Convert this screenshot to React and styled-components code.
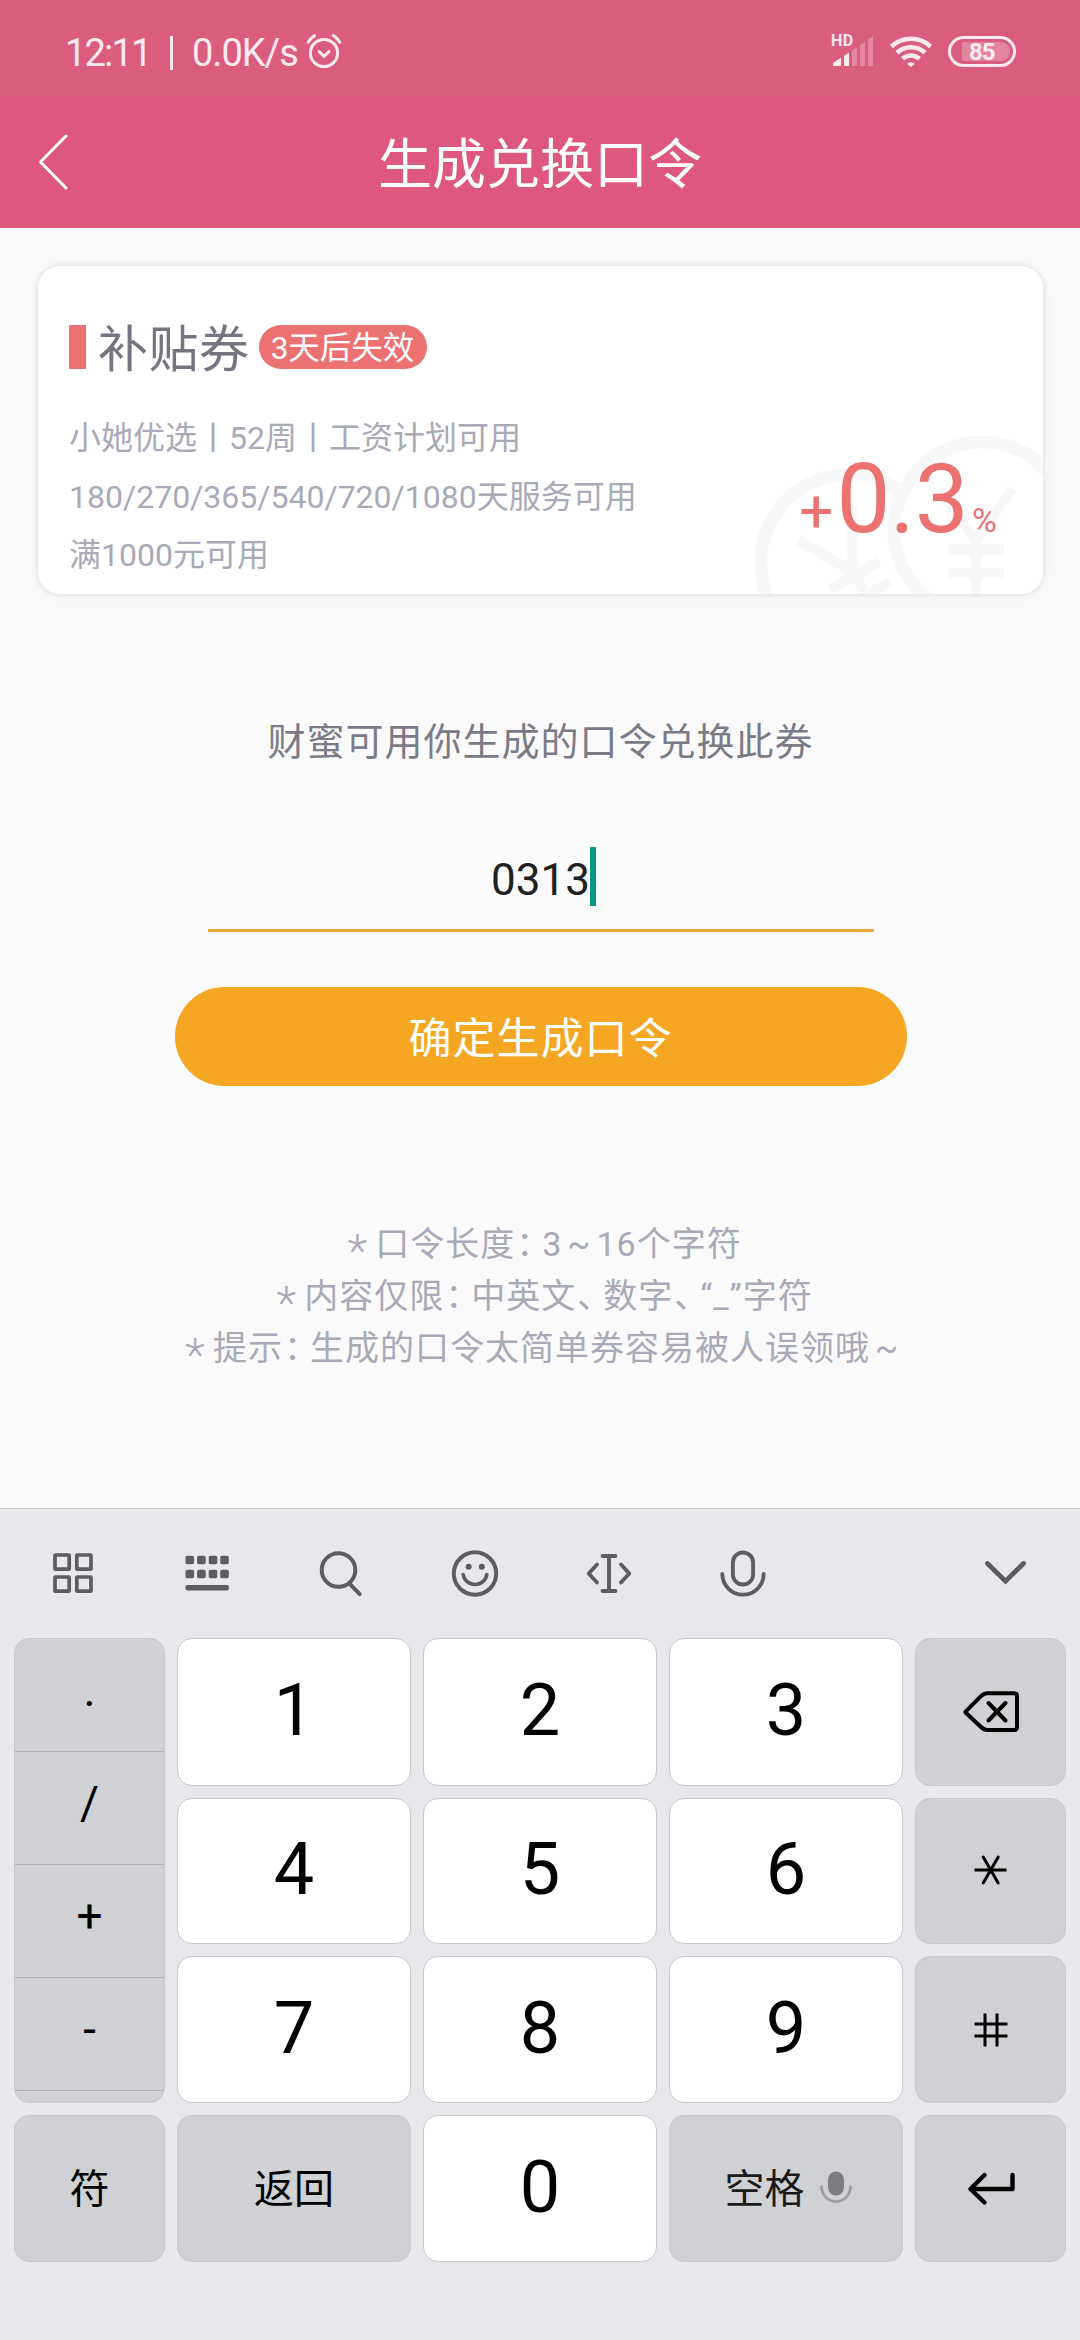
import styled, { createGlobalStyle } from "styled-components";
import { useState } from "react";

const keyRows = [
  ["1", "2", "3", "delete"],
  ["4", "5", "6", "star"],
  ["7", "8", "9", "hash"],
];

const symbols = [".", "/", "+", "-"];

const AlarmIcon = () => (
  <svg width="36" height="36" viewBox="0 0 36 36" fill="none" stroke="currentColor" strokeLinecap="round">
    <circle cx="18" cy="20" r="13.6" strokeWidth="3" />
    <path d="M13 18.5l5 4.8 5-4.8" strokeWidth="3" strokeLinejoin="round" />
    <path d="M2.2 9.2C3.8 6.2 6 4 8.6 2.6M33.8 9.2C32.2 6.2 30 4 27.4 2.6" strokeWidth="3" />
  </svg>
);

const SignalIcon = () => (
  <svg width="42" height="30" viewBox="0 0 42 30" fill="currentColor">
    <path d="M1 30v-3l8-5.5V30zM12 30V20l5-3.5V30z" />
    <path d="M20 30V14.5l5-3V30zM28 30V9l5-3.2V30zM36 30V3.5L41 0v30z" opacity="0.3" />
  </svg>
);

const WifiIcon = () => (
  <svg width="42" height="31" viewBox="0 0 42 31" fill="none" stroke="currentColor" strokeWidth="4.6">
    <path d="M1.4 10.6a28.5 28.5 0 0 1 39.2 0" />
    <path d="M7 16.8a20.5 20.5 0 0 1 28 0" />
    <path d="M12.6 22.8a12.5 12.5 0 0 1 16.8 0" />
    <path d="M21 31l-3.8-3.2a5.5 5.5 0 0 1 7.6 0z" fill="currentColor" stroke="none" />
  </svg>
);

const BackIcon = () => (
  <svg width="30" height="56" viewBox="0 0 30 56" fill="none" stroke="#fff" strokeWidth="3" strokeLinecap="round">
    <path d="M27 2L2.2 27.2q-.7.8 0 1.600L27 54" />
  </svg>
);

const Coins = () => (
  <svg width="300" height="170" viewBox="743 424 300 170" fill="none" stroke="#f8f8f8">
    <circle cx="849" cy="563" r="88.500" strokeWidth="13" />
    <path d="M798 540l54 31M852.500 506v65l24 42M830 589l49-27M843 608l47-26" strokeWidth="10.500" />
    <circle cx="982" cy="530" r="88" strokeWidth="13" fill="#fff" />
    <path d="M939 489l37 52 36-52M976 538v60M948.500 549.500H1004M948.500 573H1004" strokeWidth="10" />
  </svg>
);

const toolIcons = {
  grid: (
    <g strokeWidth="3.7">
      <rect x="6" y="6" width="14.200" height="14.200" rx="0.500" />
      <rect x="27.800" y="6" width="14.200" height="14.200" rx="0.500" />
      <rect x="6" y="28" width="14.200" height="14.200" rx="0.500" />
      <rect x="27.800" y="28" width="14.200" height="14.200" rx="0.500" />
    </g>
  ),
  keyboard: (
    <g fill="currentColor" stroke="none">
      {[6.7, 20.7].map((y) =>
        [2.5, 14.1, 25.7, 37.2].map((x) => (
          <rect key={`${x}-${y}`} x={x} y={y} width="8.600" height="8.600" rx="1.800" />
        ))
      )}
      <rect x="2.5" y="36" width="43.300" height="5.400" rx="1.800" />
    </g>
  ),
  search: (
    <g strokeWidth="4">
      <circle cx="21.500" cy="21" r="16.800" />
      <path d="M33.200 35.300l9.500 9.800" />
    </g>
  ),
  smile: (
    <g strokeWidth="4">
      <circle cx="24" cy="24.500" r="21.200" />
      <circle cx="17.700" cy="17.700" r="3" fill="currentColor" stroke="none" />
      <circle cx="30.800" cy="17.700" r="3" fill="currentColor" stroke="none" />
      <path d="M12.200 25.500a11.900 11.500 0 0 0 23.600 0" strokeWidth="3.600" />
    </g>
  ),
  cursor: (
    <g strokeWidth="3.900" strokeLinejoin="round">
      <path d="M17.500 7h13M17.500 42h13M24 7v35" />
      <path d="M12 15.500L3.700 24.500l8.300 9M36 15.500l8.300 9-8.300 9" />
    </g>
  ),
  mic: (
    <g strokeWidth="3.800">
      <rect x="13.900" y="3.500" width="20.200" height="32" rx="10.100" />
      <path d="M3.300 24.800a20.700 20.900 0 0 0 41.400 0" />
    </g>
  ),
  down: <path d="M6.500 14.500l18 17.600 18-17.600" strokeWidth="4.800" />,
};

const ToolIcon = ({ name }) => (
  <svg width="48" height="48" viewBox="0 0 48 48" fill="none" stroke="currentColor" strokeLinecap="round">
    {toolIcons[name]}
  </svg>
);

const keyIcons = {
  delete: (
    <g strokeWidth="4" strokeLinejoin="round">
      <path d="M4.800 21.300L20 6.200q3-3 6.500-3H53q3 0 3 3V37q0 3-3 3H26.500q-3.500 0-6.500-3L4.800 22.700q-.7-.7 0-1.400z" />
      <path d="M27.500 13l17 17.500M44.500 13l-17 17.500" />
    </g>
  ),
  star: (
    <g strokeWidth="3">
      <path d="M13.500 21h32" strokeLinecap="butt" />
      <path d="M22.200 8l15 26M37.200 8l-15 26" />
    </g>
  ),
  hash: (
    <path d="M24 5.500v33M36 5.500v33M13.500 16H46.500M13.500 28H46.500" strokeWidth="3" strokeLinecap="butt" />
  ),
  enter: (
    <g strokeWidth="4.400" strokeLinejoin="round">
      <path d="M23.500 8L9.500 22l14 13.500" />
      <path d="M10 22h41.500V8" />
    </g>
  ),
};

const KeyIcon = ({ name }) => (
  <svg width="60" height="44" viewBox="0 0 60 44" fill="none" stroke="#000" strokeLinecap="round">
    {keyIcons[name]}
  </svg>
);

const SpaceMic = () => (
  <svg width="34" height="36" viewBox="0 0 34 36" fill="none">
    <rect x="9" y="1.500" width="16" height="24" rx="8" fill="#7c7d7f" />
    <path d="M2.500 16.500a14.500 15 0 0 0 29 0" stroke="#9b9c9e" strokeWidth="2.600" strokeLinecap="round" />
  </svg>
);

const Coupon = () => (
  <Card>
    <Watermark>
      <Coins />
    </Watermark>
    <CardHead>
      <Marker />
      <h2>补贴券</h2>
      <Badge>3天后失效</Badge>
    </CardHead>
    <CardBody>
      <Terms>
        <p>小她优选丨52周丨工资计划可用</p>
        <p>180/270/365/540/720/1080天服务可用</p>
        <p>满1000元可用</p>
      </Terms>
      <Rate>
        <small>+</small>
        <strong>0.3</strong>
        <span>%</span>
      </Rate>
    </CardBody>
  </Card>
);

const Keyboard = ({ onInput, onDelete }) => (
  <Pad>
    <Toolbar>
      {["grid", "keyboard", "search", "smile", "cursor", "mic"].map((name) => (
        <Tool key={name}>
          <ToolIcon name={name} />
        </Tool>
      ))}
      <Tool $last>
        <ToolIcon name="down" />
      </Tool>
    </Toolbar>
    <Keys>
      <SymbolColumn>
        {symbols.map((s) => (
          <SymbolKey key={s} onClick={() => onInput(s)}>
            {s}
          </SymbolKey>
        ))}
      </SymbolColumn>
      {keyRows.map((row) =>
        row.map((k) =>
          keyIcons[k] ? (
            <Key key={k} $grey onClick={k === "delete" ? onDelete : undefined}>
              <KeyIcon name={k} />
            </Key>
          ) : (
            <Key key={k} onClick={() => onInput(k)}>
              {k}
            </Key>
          )
        )
      )}
      <Key $grey $text>符</Key>
      <Key $grey $text>返回</Key>
      <Key onClick={() => onInput("0")}>0</Key>
      <Key $grey $text $soft>
        空格
        <SpaceMic />
      </Key>
      <Key $grey>
        <KeyIcon name="enter" />
      </Key>
    </Keys>
  </Pad>
);

const App = () => {
  const [code, setCode] = useState("0313");

  return (
    <Screen>
      <GlobalStyle />
      <StatusBar>
        <Clock>12:11</Clock>
        <Divider />
        <Speed>0.0K/s</Speed>
        <AlarmIcon />
        <Signal>
          <b>HD</b>
          <SignalIcon />
        </Signal>
        <WifiIcon />
        <Battery>
          <span>85</span>
        </Battery>
      </StatusBar>
      <Header>
        <BackIcon />
        <h1>生成兑换口令</h1>
      </Header>
      <Content>
        <Coupon />
        <Prompt>财蜜可用你生成的口令兑换此券</Prompt>
        <Field>
          <span>{code}</span>
          <Caret />
        </Field>
        <Submit>确定生成口令</Submit>
        <Notes>
          <p>
            <Star>*</Star>口令长度<Punct>：</Punct>3<Tilde>~</Tilde>16个字符
          </p>
          <p>
            <Star>*</Star>内容仅限<Punct>：</Punct>中英文<Punct>、</Punct>数字<Punct>、</Punct>“_”字符
          </p>
          <p>
            <Star>*</Star>提示<Punct>：</Punct>生成的口令太简单券容易被人误领哦<Tilde>~</Tilde>
          </p>
        </Notes>
      </Content>
      <Keyboard
        onInput={(k) => setCode(code + k)}
        onDelete={() => setCode(code.slice(0, -1))}
      />
    </Screen>
  );
};
export default App;

const GlobalStyle = createGlobalStyle`
  * {
    box-sizing: border-box;
    margin: 0;
    padding: 0;
  }

  body {
    background: #fafafa;
    font-family: Roboto, "Noto Sans CJK SC", sans-serif;
  }

  button {
    font-family: inherit;
    border: none;
  }

  svg {
    display: block;
    flex-shrink: 0;
  }
`;

const Screen = styled.div`
  width: 1080px;
  height: 2340px;
  display: flex;
  flex-direction: column;
  overflow: hidden;
`;

const StatusBar = styled.div`
  height: 97px;
  padding: 5px 64px 0 65px;
  display: flex;
  align-items: center;
  background: #da5d80;
  color: #ffe9f1;
  font-size: 38px;
`;

const Clock = styled.span`
  width: 105px;
  padding-top: 4px;
  letter-spacing: -1.8px;
`;

const Divider = styled.i`
  width: 3px;
  height: 34px;
  margin-top: 3px;
  margin-right: 19px;
  background: currentColor;
`;

const Speed = styled.span`
  width: 114px;
  padding-top: 4px;
  letter-spacing: -1px;
`;

const Signal = styled.div`
  height: 30px;
  margin-left: auto;
  margin-right: 16px;
  position: relative;

  b {
    position: absolute;
    left: -1px;
    top: -3px;
    font-size: 16px;
    line-height: 16px;
    letter-spacing: 0.5px;
  }
`;

const Battery = styled.div`
  width: 68px;
  height: 31px;
  margin-left: 16px;
  padding: 3px 3px 3px 11px;
  border: 3px solid currentColor;
  border-radius: 16px;

  span {
    display: block;
    height: 19px;
    padding-left: 7px;
    border-radius: 2px 9px 9px 2px;
    background: rgba(255, 255, 255, 0.25);
    font-size: 24px;
    line-height: 20px;
    font-weight: 700;
    letter-spacing: -1px;
  }
`;

const Header = styled.header`
  height: 131px;
  padding: 0 39px 2px;
  display: grid;
  grid-template-columns: 60px 1fr 60px;
  align-items: center;
  background: #de577f;

  h1 {
    padding-top: 9px;
    color: #fff;
    font-size: 54px;
    font-weight: 400;
    line-height: 60px;
    text-align: center;
  }
`;

const Content = styled.main`
  height: 1280px;
  padding: 38px 37px 0 38px;
  display: flex;
  flex-direction: column;
  align-items: center;
  background: #fafafa;
`;

const Card = styled.section`
  width: 1005px;
  height: 328px;
  padding: 59px 46px 0 31px;
  position: relative;
  background: #fff;
  border-radius: 22px;
  box-shadow: 0 0 6px rgba(0, 0, 0, 0.13), 0 3px 20px rgba(0, 0, 0, 0.03);
`;

const Watermark = styled.div`
  position: absolute;
  right: 0;
  bottom: 0;
  border-radius: 0 0 22px 0;
  overflow: hidden;
`;

const CardHead = styled.div`
  height: 44px;
  display: flex;
  align-items: center;

  h2 {
    margin: 6px 9px 0 12px;
    color: #747482;
    font-size: 50px;
    font-weight: 400;
    line-height: 50px;
    letter-spacing: 0.5px;
  }
`;

const Marker = styled.i`
  width: 17px;
  height: 44px;
  background: #ec7271;
`;

const Badge = styled.span`
  height: 44px;
  width: 168px;
  border-radius: 22px;
  background: #ec7271;
  color: #fff;
  font-size: 31.5px;
  line-height: 47px;
  text-align: center;
`;

const CardBody = styled.div`
  display: flex;
  justify-content: space-between;
  position: relative;
`;

const Terms = styled.div`
  padding-top: 40px;
  color: #a9a9b8;
  font-size: 32px;
  line-height: 58.5px;
`;

const Rate = styled.div`
  padding-top: 74px;
  display: flex;
  align-items: baseline;
  color: #ec7271;
  line-height: 112px;

  small {
    margin-right: 3px;
    font-size: 60px;
  }

  strong {
    font-size: 96px;
    font-weight: 400;
    letter-spacing: -0.5px;
  }

  span {
    margin-left: 4px;
    font-size: 34px;
  }
`;

const Prompt = styled.p`
  margin-top: 120px;
  color: #7b7a88;
  font-size: 38px;
  line-height: 56px;
  letter-spacing: 1px;
`;

const Field = styled.div`
  width: 666px;
  height: 96px;
  margin-top: 66px;
  padding-bottom: 12px;
  display: flex;
  align-items: center;
  justify-content: center;
  border-bottom: 3px solid #eaa93b;
  color: #212121;
  font-size: 44px;

  span {
    padding-top: 6px;
  }
`;

const Caret = styled.i`
  width: 6px;
  height: 59px;
  margin-right: -6px;
  background: #0a9585;
`;

const Submit = styled.button`
  width: 732px;
  height: 99px;
  margin-top: 55px;
  padding-bottom: 3px;
  border-radius: 50px;
  background: #f5a623;
  color: #fff;
  font-size: 43px;
  letter-spacing: 1px;
`;

const Notes = styled.div`
  margin-top: 132px;
  color: #a9a9b8;
  font-size: 34px;
  line-height: 52px;
  letter-spacing: 1px;
  text-align: center;
  white-space: nowrap;
`;

const Star = styled.span`
  display: inline-block;
  width: 36px;
  font-size: 46px;
  font-weight: 300;
  line-height: 20px;
  vertical-align: -11px;
  letter-spacing: 0;
`;

const Punct = styled.span`
  display: inline-block;
  width: 27px;
  padding-left: 1px;
  font-feature-settings: "halt";
  letter-spacing: 0;
  text-align: left;
`;

const Tilde = styled.span`
  display: inline-block;
  width: 34px;
  text-align: center;
`;

const Pad = styled.section`
  height: 832px;
  background: #e6e8ec;
  border-top: 1px solid #cbcdd0;
`;

const Toolbar = styled.div`
  height: 129px;
  padding: 0 8px 2px 6px;
  display: flex;
  align-items: center;
  color: #5c5d5f;
`;

const Tool = styled.div`
  width: 134px;
  margin-left: ${({ $last }) => ($last ? "auto" : 0)};
  display: flex;
  justify-content: center;
`;

const Keys = styled.div`
  padding: 0 14px;
  display: grid;
  grid-template-columns: 151px repeat(3, 234px) 151px;
  grid-template-rows: 148px 146px 147px 147px;
  gap: 12px;
`;

const Key = styled.button`
  padding-bottom: ${({ $grey, $text }) => ($text ? "6px" : $grey ? 0 : "3px")};
  padding-left: ${({ $soft }) => ($soft ? "5px" : 0)};
  display: flex;
  align-items: center;
  justify-content: center;
  gap: 14px;
  border: 1px solid #c6c8cb;
  border-radius: 15px;
  background: ${({ $grey }) => ($grey ? "#d0d1d5" : "#fff")};
  color: ${({ $soft }) => ($soft ? "#1a1a1a" : "#000")};
  font-size: ${({ $text }) => ($text ? "40px" : "72px")};

  svg {
    margin-top: ${({ $text }) => ($text ? "4px" : 0)};
  }
`;

const SymbolColumn = styled.div`
  grid-row: 1 / 4;
  border: 1px solid #c6c8cb;
  border-radius: 15px;
  background: #d0d1d5;
  overflow: hidden;
`;

const SymbolKey = styled.button`
  width: 100%;
  height: 113px;
  padding-bottom: 10px;
  display: block;
  border-bottom: 1px solid #b0b1b4;
  background: none;
  color: #000;
  font-size: 46px;
`;
